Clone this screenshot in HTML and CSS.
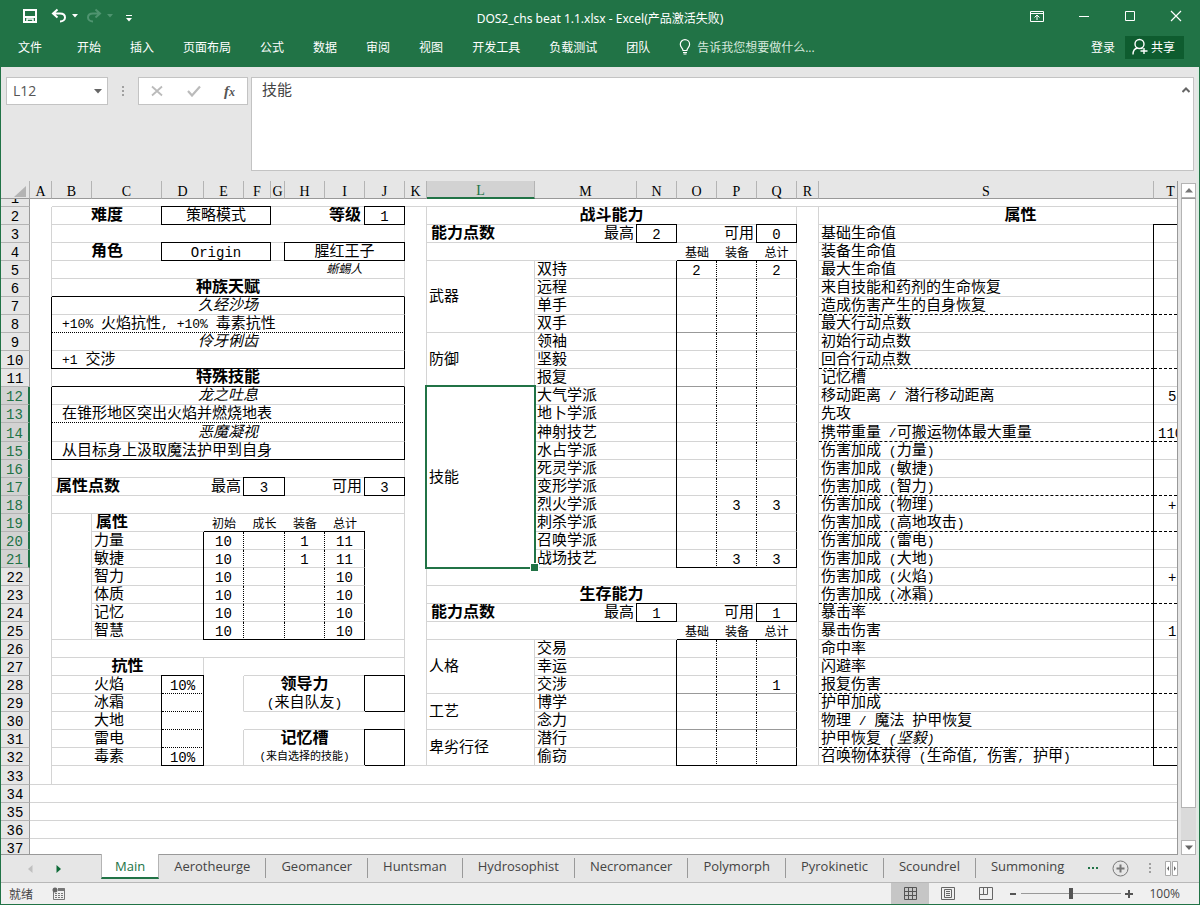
FILE: index.html
```html
<!DOCTYPE html>
<html lang="zh-CN">
<head>
<meta charset="utf-8">
<title>DOS2_chs beat 1.1.xlsx - Excel</title>
<link rel="stylesheet" href="styles.css">
</head>
<body>
<div class="app">
<header class="ribbon">
  <div class="titlebar">
    <div class="quick">
      <button aria-label="保存"><svg width="16" height="16" viewBox="0 0 16 16" fill="none" stroke="#fff" stroke-width="2"><path d="M2 2h12v12H2zM2 9h12"/><path d="M5 14v-3h6v3" stroke-width="1.500"/></svg></button>
      <button aria-label="撤消" class="undo"><svg width="16" height="16" viewBox="0 0 16 16" fill="none" stroke="#fff" stroke-width="2"><path d="M6.500 1.500L2 5.500l4.500 4M2.500 5.500h6.500c3.500 0 5 2 5 4s-2 4-5 4"/></svg></button>
      <button aria-label="撤消列表"><svg width="6" height="4" viewBox="0 0 6 4"><path d="M0 0h6L3 3.500z" fill="#fff"/></svg></button>
      <button aria-label="恢复" class="redo"><svg width="16" height="16" viewBox="0 0 16 16" fill="none" stroke="#4f9470" stroke-width="2"><path d="M9.500 1.500L14 5.500l-4.500 4M13.500 5.500H7c-3.500 0-5 2-5 4s2 4 5 4"/></svg></button>
      <button aria-label="恢复列表"><svg width="6" height="4" viewBox="0 0 6 4"><path d="M0 0h6L3 3.500z" fill="#4f9470"/></svg></button>
      <button aria-label="自定义" class="custom"><svg width="6" height="8" viewBox="0 0 6 8"><path d="M0 4h6L3 7.500z" fill="#fff"/><path d="M0 1.500h6" stroke="#fff"/></svg></button>
    </div>
    <div class="title">DOS2_chs beat 1.1.xlsx - Excel(产品激活失败)</div>
    <div class="winbtns">
      <button aria-label="功能区显示选项"><svg width="14" height="12" viewBox="0 0 14 12" fill="none" stroke="#fff"><path d="M.5 1.500h13v10H.5zM.5 3.500h13M7 10V5M4.500 7.500L7 5l2.500 2.500"/></svg></button>
      <button aria-label="最小化"><svg width="12" height="12" viewBox="0 0 12 12" stroke="#fff"><path d="M1 6.500h10"/></svg></button>
      <button aria-label="最大化"><svg width="12" height="12" viewBox="0 0 12 12" fill="none" stroke="#fff"><path d="M1.500 1.500h9v9h-9z"/></svg></button>
      <button aria-label="关闭"><svg width="12" height="12" viewBox="0 0 12 12" stroke="#fff" stroke-width="1.200"><path d="M1 1l10 10M11 1L1 11"/></svg></button>
    </div>
  </div>
  <nav class="menu">
    <button class="file">文件</button><button>开始</button><button>插入</button><button>页面布局</button><button>公式</button><button>数据</button><button>审阅</button><button>视图</button><button>开发工具</button><button>负载测试</button><button>团队</button>
    <button class="tell"><svg width="12" height="16" viewBox="0 0 12 16" fill="none" stroke="#fff" stroke-width="1.200"><path d="M4 11.500c0-2.500-2.700-3-2.700-6.200a4.600 4.600 0 0 1 9.300 0c0 3.200-2.700 3.700-2.700 6.200zM4 13.500h4M4.500 15h3"/></svg>告诉我您想要做什么...</button>
    <button class="login">登录</button>
    <button class="share"><svg width="16" height="17" viewBox="0 0 16 17" fill="none" stroke="#fff" stroke-width="1.400"><circle cx="7.500" cy="6" r="4.500"/><path d="M1 16.500c0-3.500 2-6 4.500-6.500M9 10l1.500 1M12 10v6M8.500 13h7"/></svg>共享</button>
  </nav>
</header>

<div class="formula">
  <div class="namebox"><input type="text" value="L12" aria-label="名称框"><button aria-label="名称列表"><svg width="8" height="5" viewBox="0 0 8 5"><path d="M0 0h8L4 4.500z" fill="#666"/></svg></button></div>
  <svg class="grip" width="3" height="12" viewBox="0 0 3 12" fill="#a0a0a0"><path d="M0 1h2v2H0zM0 5h2v2H0zM0 9h2v2H0z"/></svg>
  <div class="fxbtns">
    <button aria-label="取消"><svg width="12" height="12" viewBox="0 0 12 12" stroke="#bbb" stroke-width="1.800"><path d="M1 1.500l10 9M11 1.500l-10 9"/></svg></button>
    <button aria-label="输入"><svg width="14" height="12" viewBox="0 0 14 12" fill="none" stroke="#bbb" stroke-width="2.200"><path d="M1 6l4 4.500L13 1.500"/></svg></button>
    <button aria-label="插入函数" class="fx">f<small>x</small></button>
  </div>
  <div class="editor"><textarea aria-label="编辑栏">技能</textarea><button aria-label="折叠编辑栏"><svg width="8" height="6" viewBox="0 0 8 6" fill="none" stroke="#666" stroke-width="2"><path d="M.5 5L4 1.500 7.500 5"/></svg></button></div>
</div>

<main class="work">
<div class="sheet">
<table class="grid">
<colgroup><col class="w29"><col class="w22"><col class="w40"><col class="w70"><col class="w42"><col class="w40"><col class="w27"><col class="w14"><col class="w40"><col class="w40"><col class="w40"><col class="w22"><col class="w108"><col class="w102"><col class="w40"><col class="w40"><col class="w40"><col class="w40"><col class="w22"><col class="w335"><col class="w34"><col class="w34"></colgroup>
<thead>
<tr><th class="corner"><svg width="12" height="11" viewBox="0 0 12 11"><path d="M12 0v11H0z" fill="#b4b4b4"/></svg></th><th>A</th><th>B</th><th>C</th><th>D</th><th>E</th><th>F</th><th>G</th><th>H</th><th>I</th><th>J</th><th>K</th><th class="on">L</th><th>M</th><th>N</th><th>O</th><th>P</th><th>Q</th><th>R</th><th>S</th><th>T</th><th></th></tr>
</thead>
<tbody>
<tr class="first"><th><div>1</div></th><td class="hn"></td><td colspan="20"></td></tr>
<tr><th>2</th><td rowspan="32" class="vr"></td><td colspan="2" class="c b">难度</td><td colspan="3" class="c box">策略模式</td><td></td><td colspan="2" class="rt b">等级</td><td class="n box">1</td><td rowspan="31" class="vr"></td><td colspan="6" class="c b vr">战斗能力</td><td rowspan="31" class="vr"></td><td colspan="3" class="c b">属性</td></tr>
<tr><th>3</th><td colspan="9" class="vr"></td><td class="b">能力点数</td><td class="rt">最高</td><td class="n box">2</td><td colspan="2" class="rt">可用</td><td class="n box">0</td><td>基础生命值</td><td colspan="2" class="tl"></td></tr>
<tr><th>4</th><td colspan="2" class="c b">角色</td><td colspan="3" class="n box">Origin</td><td></td><td colspan="3" class="c box">腥红王子</td><td colspan="3"></td><td class="c sm hk">基础</td><td class="c sm hk">装备</td><td class="c sm hk vr">总计</td><td>装备生命值</td><td colspan="2" class="lk"></td></tr>
<tr><th>5</th><td colspan="6"></td><td colspan="3" class="c i sm2 vr">蜥蜴人</td><td rowspan="4" class="vr">武器</td><td colspan="2">双持</td><td class="n lk vd">2</td><td class="n vd"></td><td class="n vk">2</td><td>最大生命值</td><td colspan="2" class="lk"></td></tr>
<tr><th>6</th><td colspan="9" class="c b hk vr">种族天赋</td><td colspan="2">远程</td><td class="lk vd"></td><td class="vd"></td><td class="vk"></td><td>来自技能和药剂的生命恢复</td><td colspan="2" class="lk"></td></tr>
<tr><th>7</th><td colspan="9" class="c i lk vk">久经沙场</td><td colspan="2">单手</td><td class="lk vd"></td><td class="vd"></td><td class="vk"></td><td class="hs">造成伤害产生的自身恢复</td><td colspan="2" class="lk hs"></td></tr>
<tr><th>8</th><td colspan="9" class="in lk vk hd"><span>+10% </span>火焰抗性<span>, +10% </span>毒素抗性</td><td colspan="2">双手</td><td class="lk vd hg"></td><td class="vd hg"></td><td class="vk hg"></td><td>最大行动点数</td><td colspan="2" class="lk"></td></tr>
<tr><th>9</th><td colspan="9" class="c i lk vk">伶牙俐齿</td><td rowspan="3" class="vr">防御</td><td colspan="2">领袖</td><td class="lk vd"></td><td class="vd"></td><td class="vk"></td><td>初始行动点数</td><td colspan="2" class="lk"></td></tr>
<tr><th>10</th><td colspan="9" class="in lk vk hk"><span>+1 </span>交涉</td><td colspan="2">坚毅</td><td class="lk vd"></td><td class="vd"></td><td class="vk"></td><td class="hs">回合行动点数</td><td colspan="2" class="lk hs"></td></tr>
<tr><th>11</th><td colspan="9" class="c b hk vr">特殊技能</td><td colspan="2">报复</td><td class="lk vd hg"></td><td class="vd hg"></td><td class="vk hg"></td><td>记忆槽</td><td colspan="2" class="lk"></td></tr>
<tr><th class="on">12</th><td colspan="9" class="c i lk vk">龙之吐息</td><td rowspan="10" class="vr active">技能</td><td colspan="2">大气学派</td><td class="lk vd"></td><td class="vd"></td><td class="vk"></td><td>移动距离<span> / </span>潜行移动距离</td><td colspan="2" class="lk n cut">5</td></tr>
<tr><th class="on">13</th><td colspan="9" class="in lk vk hd">在锥形地区突出火焰并燃烧地表</td><td colspan="2">地卜学派</td><td class="lk vd"></td><td class="vd"></td><td class="vk"></td><td>先攻</td><td colspan="2" class="lk"></td></tr>
<tr class="tall"><th class="on">14</th><td colspan="9" class="c i lk vk">恶魔凝视</td><td colspan="2">神射技艺</td><td class="lk vd"></td><td class="vd"></td><td class="vk"></td><td class="hs">携带重量<span> /</span>可搬运物体最大重量</td><td colspan="2" class="lk hs n cutwide">110</td></tr>
<tr><th class="on">15</th><td colspan="9" class="in lk vk hk">从目标身上汲取魔法护甲到自身</td><td colspan="2">水占学派</td><td class="lk vd"></td><td class="vd"></td><td class="vk"></td><td>伤害加成<span> (</span>力量<span>)</span></td><td colspan="2" class="lk"></td></tr>
<tr><th class="on">16</th><td colspan="9" class="vr"></td><td colspan="2">死灵学派</td><td class="lk vd"></td><td class="vd"></td><td class="vk"></td><td>伤害加成<span> (</span>敏捷<span>)</span></td><td colspan="2" class="lk"></td></tr>
<tr><th class="on">17</th><td colspan="3" class="b">属性点数</td><td class="rt">最高</td><td colspan="2" class="n box">3</td><td colspan="2" class="rt">可用</td><td class="n box">3</td><td colspan="2">变形学派</td><td class="lk vd"></td><td class="vd"></td><td class="vk"></td><td class="hs">伤害加成<span> (</span>智力<span>)</span></td><td colspan="2" class="lk hs"></td></tr>
<tr><th class="on">18</th><td colspan="9" class="vr"></td><td colspan="2">烈火学派</td><td class="lk vd"></td><td class="n vd">3</td><td class="n vk">3</td><td>伤害加成<span> (</span>物理<span>)</span></td><td colspan="2" class="lk n cut">+</td></tr>
<tr><th class="on">19</th><td rowspan="7" class="vr"></td><td colspan="2" class="b">属性</td><td class="c sm hk">初始</td><td colspan="2" class="c sm hk">成长</td><td class="c sm hk">装备</td><td class="c sm hk">总计</td><td rowspan="7" class="vr"></td><td colspan="2">刺杀学派</td><td class="lk vd"></td><td class="vd"></td><td class="vk"></td><td class="hs">伤害加成<span> (</span>高地攻击<span>)</span></td><td colspan="2" class="lk hs"></td></tr>
<tr><th class="on">20</th><td colspan="2">力量</td><td class="n lk vd">10</td><td colspan="2" class="vd"></td><td class="n vd">1</td><td class="n vk">11</td><td colspan="2">召唤学派</td><td class="lk vd"></td><td class="vd"></td><td class="vk"></td><td>伤害加成<span> (</span>雷电<span>)</span></td><td colspan="2" class="lk"></td></tr>
<tr><th class="on">21</th><td colspan="2">敏捷</td><td class="n lk vd">10</td><td colspan="2" class="vd"></td><td class="n vd">1</td><td class="n vk">11</td><td colspan="2">战场技艺</td><td class="lk vd hk"></td><td class="n vd hk">3</td><td class="n vk hk">3</td><td>伤害加成<span> (</span>大地<span>)</span></td><td colspan="2" class="lk"></td></tr>
<tr><th>22</th><td colspan="2">智力</td><td class="n lk vd">10</td><td colspan="2" class="vd"></td><td class="n vd"></td><td class="n vk">10</td><td colspan="6" class="vr"></td><td>伤害加成<span> (</span>火焰<span>)</span></td><td colspan="2" class="lk n cut">+</td></tr>
<tr><th>23</th><td colspan="2">体质</td><td class="n lk vd">10</td><td colspan="2" class="vd"></td><td class="n vd"></td><td class="n vk">10</td><td colspan="6" class="c b vr">生存能力</td><td class="hs">伤害加成<span> (</span>冰霜<span>)</span></td><td colspan="2" class="lk hs"></td></tr>
<tr><th>24</th><td colspan="2">记忆</td><td class="n lk vd">10</td><td colspan="2" class="vd"></td><td class="n vd"></td><td class="n vk">10</td><td class="b">能力点数</td><td class="rt">最高</td><td class="n box">1</td><td colspan="2" class="rt">可用</td><td class="n box">1</td><td>暴击率</td><td colspan="2" class="lk"></td></tr>
<tr><th>25</th><td colspan="2">智慧</td><td class="n lk vd hk">10</td><td colspan="2" class="vd hk"></td><td class="n vd hk"></td><td class="n vk hk">10</td><td colspan="3"></td><td class="c sm hk">基础</td><td class="c sm hk">装备</td><td class="c sm hk vr">总计</td><td>暴击伤害</td><td colspan="2" class="lk n cut">1</td></tr>
<tr><th>26</th><td colspan="9" class="vr"></td><td rowspan="3" class="vr">人格</td><td colspan="2">交易</td><td class="lk vd"></td><td class="vd"></td><td class="vk"></td><td>命中率</td><td colspan="2" class="lk"></td></tr>
<tr><th>27</th><td colspan="3" class="c b vr">抗性</td><td class="hn"></td><td colspan="4"></td><td class="vr"></td><td colspan="2">幸运</td><td class="lk vd"></td><td class="vd"></td><td class="vk"></td><td>闪避率</td><td colspan="2" class="lk"></td></tr>
<tr><th>28</th><td></td><td>火焰</td><td class="n tl vk hd">10%</td><td rowspan="2" class="vr hn"></td><td colspan="4" class="c b hn">领导力</td><td rowspan="2" class="box"></td><td colspan="2">交涉</td><td class="lk vd hg"></td><td class="vd hg"></td><td class="n vk hg">1</td><td class="hs">报复伤害</td><td colspan="2" class="lk hs"></td></tr>
<tr><th>29</th><td></td><td>冰霜</td><td class="lk vk hd"></td><td colspan="4" class="c"><span>(</span>来自队友<span>)</span></td><td rowspan="2" class="vr">工艺</td><td colspan="2">博学</td><td class="lk vd"></td><td class="vd"></td><td class="vk"></td><td>护甲加成</td><td colspan="2" class="lk"></td></tr>
<tr><th>30</th><td></td><td>大地</td><td class="lk vk hd"></td><td class="hn"></td><td colspan="4"></td><td class="vr"></td><td colspan="2">念力</td><td class="lk vd hg"></td><td class="vd hg"></td><td class="vk hg"></td><td>物理<span> / </span>魔法<span> </span>护甲恢复</td><td colspan="2" class="lk"></td></tr>
<tr><th>31</th><td></td><td>雷电</td><td class="lk vk hd"></td><td rowspan="2" class="vr"></td><td colspan="4" class="c b hn">记忆槽</td><td rowspan="2" class="box"></td><td rowspan="2" class="vr">卑劣行径</td><td colspan="2">潜行</td><td class="lk vd"></td><td class="vd"></td><td class="vk"></td><td class="hs">护甲恢复<span> </span><i><span>(</span>坚毅<span>)</span></i></td><td colspan="2" class="lk hs"></td></tr>
<tr><th>32</th><td></td><td>毒素</td><td class="n lk vk hk">10%</td><td colspan="4" class="c xs">(来自选择的技能)</td><td colspan="2">偷窃</td><td class="lk vd hk"></td><td class="vd hk"></td><td class="vk hk"></td><td>召唤物体获得<span> (</span>生命值<span>, </span>伤害<span>, </span>护甲<span>)</span></td><td colspan="2" class="lk hk"></td></tr>
<tr class="tall"><th>33</th><td colspan="20"></td></tr>
<tr><th>34</th><td colspan="21"></td></tr>
<tr><th>35</th><td colspan="21"></td></tr>
<tr><th>36</th><td colspan="21"></td></tr>
<tr><th>37</th><td colspan="21"></td></tr>
</tbody>
</table>
</div>
<div class="scroll">
  <button aria-label="向上滚动"><svg width="8" height="5" viewBox="0 0 8 5"><path d="M0 4.500h8L4 0z" fill="#777"/></svg></button>
  <div class="track"><div class="thumb"></div></div>
  <button aria-label="向下滚动"><svg width="8" height="5" viewBox="0 0 8 5"><path d="M0 .5h8L4 5z" fill="#666"/></svg></button>
</div>
</main>

<div class="tabs">
  <div class="tabnav">
    <button aria-label="上一个工作表"><svg width="5" height="8" viewBox="0 0 5 8"><path d="M4.500 0v8L0 4z" fill="#c0c0c0"/></svg></button>
    <button aria-label="下一个工作表"><svg width="5" height="8" viewBox="0 0 5 8"><path d="M.5 0v8L5 4z" fill="#0e6b38"/></svg></button>
  </div>
  <button class="tab cur">Main</button><button class="tab">Aerotheurge</button><button class="tab">Geomancer</button><button class="tab">Huntsman</button><button class="tab">Hydrosophist</button><button class="tab">Necromancer</button><button class="tab">Polymorph</button><button class="tab">Pyrokinetic</button><button class="tab">Scoundrel</button><button class="tab last">Summoning</button>
  <div class="tabtools">
    <button class="more" aria-label="更多工作表"><svg width="11" height="3" viewBox="0 0 11 3" fill="#217346"><path d="M0 0h2v2H0zM4 0h2v2H4zM8 0h2v2H8z"/></svg></button>
    <button aria-label="新工作表"><svg width="17" height="17" viewBox="0 0 17 17" fill="none" stroke="#777"><circle cx="8.500" cy="8.500" r="7.500"/><path d="M8.500 4.500v8M4.500 8.500h8" stroke-width="2"/></svg></button>
    <svg class="dots" width="2" height="11" viewBox="0 0 2 11" fill="#a0a0a0"><path d="M0 0h2v2H0zM0 4h2v2H0zM0 8h2v2H0z"/></svg>
    <svg width="13" height="15" viewBox="0 0 13 15" fill="#fff" stroke="#aaa"><path d="M.5.5h5v14h-5zM7.500.5h5v14h-5z"/><path d="M4 5v5L2 7.500zM9 5v5l2-2.500z" fill="#666" stroke="none"/></svg>
  </div>
</div>

<footer class="status">
  <span>就绪</span>
  <button class="macro" aria-label="录制宏"><svg width="13" height="13" viewBox="0 0 13 13" fill="none" stroke="#777"><path d="M1.500 5v7.500h11v-11H7"/><path d="M6 2.500h6.500" stroke-width="3"/><path d="M3 6.500h2M6 6.500h2M9 6.500h2M3 8.500h2M6 8.500h2M9 8.500h2M3 10.500h2M6 10.500h2M9 10.500h2"/><circle cx="3" cy="3" r="2.500" fill="#666" stroke="none"/></svg></button>
  <div class="views">
    <button class="on" aria-label="普通"><svg width="13" height="13" viewBox="0 0 13 13" fill="none" stroke="#555"><path d="M.5.5h12v12H.5zM4.500.5v12M8.500.5v12M.5 4.500h12M.5 8.500h12"/></svg></button>
    <button aria-label="页面布局"><svg width="14" height="13" viewBox="0 0 14 13" fill="none" stroke="#666"><path d="M.5.5h13v12H.5zM3.500 2.500h7v8h-7zM5 4.500h4M5 6.500h4M5 8.500h4"/></svg></button>
    <button aria-label="分页预览"><svg width="14" height="13" viewBox="0 0 14 13" fill="none" stroke="#666"><path d="M.5.5h13v12H.5zM.5 7.500h8v-7M4.500.5v7"/></svg></button>
  </div>
  <button aria-label="缩小"><svg width="8" height="8" viewBox="0 0 8 8"><path d="M1 4h6" stroke="#555" stroke-width="2"/></svg></button>
  <input type="range" min="0" max="100" value="50" aria-label="缩放">
  <button aria-label="放大"><svg width="8" height="8" viewBox="0 0 8 8"><path d="M0 4h8M4 0v8" stroke="#555" stroke-width="2"/></svg></button>
  <span class="pct">100%</span>
</footer>
</div>
</body>
</html>
```
FILE: styles.css
```css
* { box-sizing: border-box; }
body { margin: 0; font: 12px "Open Sans", "Noto Sans CJK SC", sans-serif; color: #444; }
button { border: 0; background: none; padding: 0; margin: 0; font: inherit; color: inherit; display: flex; align-items: center; justify-content: center; }
svg { display: block; flex: none; }
.app { display: flex; flex-direction: column; height: 100vh; background: #e6e6e6; border: 1px solid #217346; border-top: 0; overflow: hidden; }

/* title bar and ribbon tabs */
.ribbon { background: #217346; color: #fff; padding-bottom: 8px; }
.titlebar { display: grid; grid-template-columns: 1fr auto 1fr; align-items: center; height: 36px; }
.quick { display: flex; align-items: center; padding: 0 0 4px 21px; }
.quick .undo { margin: 0 5px 0 13px; }
.quick .redo { margin: 0 5px 0 8px; }
.quick .custom { margin: 3px 0 0 13px; }
.title { white-space: nowrap; font-family: "Noto Sans", "Noto Sans CJK SC", sans-serif; }
.winbtns { display: flex; justify-content: flex-end; align-items: center; gap: 34px; padding: 0 17px 4px 0; }
.menu { display: flex; align-items: center; height: 23px; padding: 0 15px 0 17px; gap: 29px; white-space: nowrap; }
.menu button { padding-bottom: 2px; }
.menu .file { margin-right: 6px; }
.menu .tell { gap: 6px; color: #d5e8dc; }
.menu .login { margin-left: auto; }
.menu .share { background: #0e5c2f; height: 23px; padding: 0 9px 2px 7px; gap: 3px; margin-left: -19px; }

/* formula bar */
.formula { display: flex; align-items: flex-start; padding: 10px 3px 10px 5px; border-right: 2px solid #dcebe2; }
.namebox, .fxbtns, .editor { background: #fff; border: 1px solid #c3c3c3; display: flex; }
.namebox { width: 102px; height: 28px; padding-right: 5px; }
.namebox input { flex: 1; min-width: 0; border: 0; padding: 0 6px 1px; font: 14px "Open Sans", sans-serif; color: #555; background: none; }
.grip { margin: 8px 13px 0 14px; }
.fxbtns { width: 110px; height: 28px; justify-content: space-between; padding: 0 12px; }
.fx { font: italic bold 15px "Liberation Serif", serif; color: #555; }
.fx small { font-size: 12px; padding-top: 3px; }
.editor { flex: 1; height: 94px; margin-left: 3px; align-items: flex-start; padding: 1px 3px 0 10px; }
.editor textarea { flex: 1; height: 85px; border: 0; padding: 0; resize: none; font: 15px/20px "Open Sans", "Noto Sans CJK SC", sans-serif; color: #444; background: none; }
.editor button { padding-top: 8px; }

/* worksheet */
.work { flex: 1; min-height: 0; display: flex; border-right: 2px solid #dcebe2; }
.sheet { flex: 1; min-width: 0; overflow: hidden; background: #fff; border-right: 1px solid #999; border-bottom: 1px solid #999; }
.grid { table-layout: fixed; width: 1221px; border-collapse: separate; border-spacing: 0; color: #000; font: 15px/15px "Liberation Mono", "Noto Sans CJK SC", monospace; }
.w14 { width: 14px; } .w22 { width: 22px; } .w27 { width: 27px; } .w29 { width: 29px; }
.w34 { width: 34px; } .w40 { width: 40px; } .w42 { width: 42px; } .w70 { width: 70px; }
.w102 { width: 102px; } .w108 { width: 108px; } .w335 { width: 335px; }
.grid tr { height: 18px; }
.grid .tall { height: 19px; }
.grid .first { height: 8px; }
.grid th { padding: 4px 0 0; background: #e6e6e6; font-weight: normal; font-size: 14px; line-height: 13px; border-right: 1px solid #999; border-bottom: 1px solid #b4b4b4; }
.grid .first th { padding: 0; }
.grid .first div { height: 7px; overflow: hidden; display: flex; align-items: flex-end; justify-content: center; line-height: 13px; }
.grid thead th { font-family: "Liberation Serif", serif; border-right-color: #b4b4b4; border-bottom-color: #999; }
.grid th.on { background: #d2d2d2; color: #217346; border-right: 2px solid #217346; }
.grid thead th.on { border-right: 1px solid #b4b4b4; border-bottom: 2px solid #217346; line-height: 12px; }
.grid .corner { padding: 3px 0 0 13px; }
.grid td { padding: 2px 3px 0 2px; border-bottom: 1px solid #d4d4d4; white-space: nowrap; overflow: hidden; }
.grid td span { font-size: 13px; }
.grid .first td { padding: 0; }
.grid .b { font-weight: bold; font-size: 16px; padding: 2px 4px 0; }
.grid .i { font-style: italic; }
.grid .c { text-align: center; padding: 2px 0 0; }
.grid .rt { text-align: right; }
.grid .in { padding-left: 10px; }
.grid .n { text-align: center; font-size: 14px; line-height: 13px; padding: 4px 0 0; }
.grid .cut { text-align: left; padding-left: 14px; }
.grid .cutwide { text-align: left; padding-left: 4px; }
.grid .sm { font-size: 12px; line-height: 11px; padding: 6px 0 0; }
.grid .sm2 { font-size: 12px; }
.grid .xs { font-size: 11px; }

/* cell borders: v* is the right edge, h* the bottom edge */
.grid .vr { border-right: 1px solid #d4d4d4; }
.grid .vk { border-right: 1px solid #000; }
.grid .vd { border-right: 1px dotted #000; }
.grid .hn { border-bottom-color: transparent; }
.grid .hk { border-bottom-color: #000; }
.grid .hd { border-bottom: 1px dotted #000; }
.grid .hs { border-bottom: 1px dashed #000; }
.grid .hg { border-bottom-color: #999; }
.grid .lk { box-shadow: -1px 0 0 #000; }
.grid .tl { box-shadow: -1px 0 0 #000, 0 -1px 0 #000, -1px -1px 0 #000; }
.grid .box { border-right: 1px solid #000; border-bottom: 1px solid #000; box-shadow: -1px 0 0 #000, 0 -1px 0 #000, -1px -1px 0 #000; }
.grid .active { position: relative; overflow: visible; }
.active::before { content: ""; position: absolute; inset: -2px; border: 2px solid #217346; }
.active::after { content: ""; position: absolute; right: -5px; bottom: -5px; width: 7px; height: 7px; background: #217346; border: 1px solid #fff; }

.scroll { width: 19px; padding: 2px 1px 0 3px; display: flex; flex-direction: column; }
.scroll button { height: 15px; background: #fff; border: 1px solid #b4b4b4; }
.track { flex: 1; background: #dadada; display: flex; }
.thumb { flex: 1; height: 95%; background: #fff; border: 1px solid #b4b4b4; border-top-color: #999; }

/* sheet tabs */
.tabs { display: flex; height: 28px; border-bottom: 1px solid #b8b8b8; }
.tabnav { width: 100px; display: flex; gap: 23px; padding-left: 27px; }
.tab { height: 20px; margin-top: 3px; padding: 0 15px 4px; font: 13px "Open Sans", sans-serif; border-right: 1px solid #999; }
.tab.cur { background: #fff; color: #217346; height: 25px; margin: -1px 0 0; border: 1px solid #b4b4b4; border-top: 0; border-bottom: 2px solid #217346; padding: 0 13px; }
.tab.last { border: 0; }
.tabtools { display: flex; align-items: center; gap: 13px; margin-left: auto; padding-right: 21px; }
.tabtools .dots { margin: 0 1px 0 7px; }

/* status bar */
.status { display: flex; align-items: center; height: 21px; background: #f0f0f0; padding: 0 19px 0 8px; }
.status .macro { margin-left: 19px; }
.views { display: flex; margin: 0 4px 0 auto; align-self: stretch; }
.views button { width: 38px; }
.views .on { background: #c6c6c6; }
.status input { -webkit-appearance: none; appearance: none; width: 100px; height: 12px; margin: 0 4px; background: linear-gradient(#999, #999) center / 100% 1px no-repeat; }
.status input::-webkit-slider-thumb { -webkit-appearance: none; width: 4px; height: 11px; background: #555; border: 0; }
.pct { margin-left: 16px; }
```
